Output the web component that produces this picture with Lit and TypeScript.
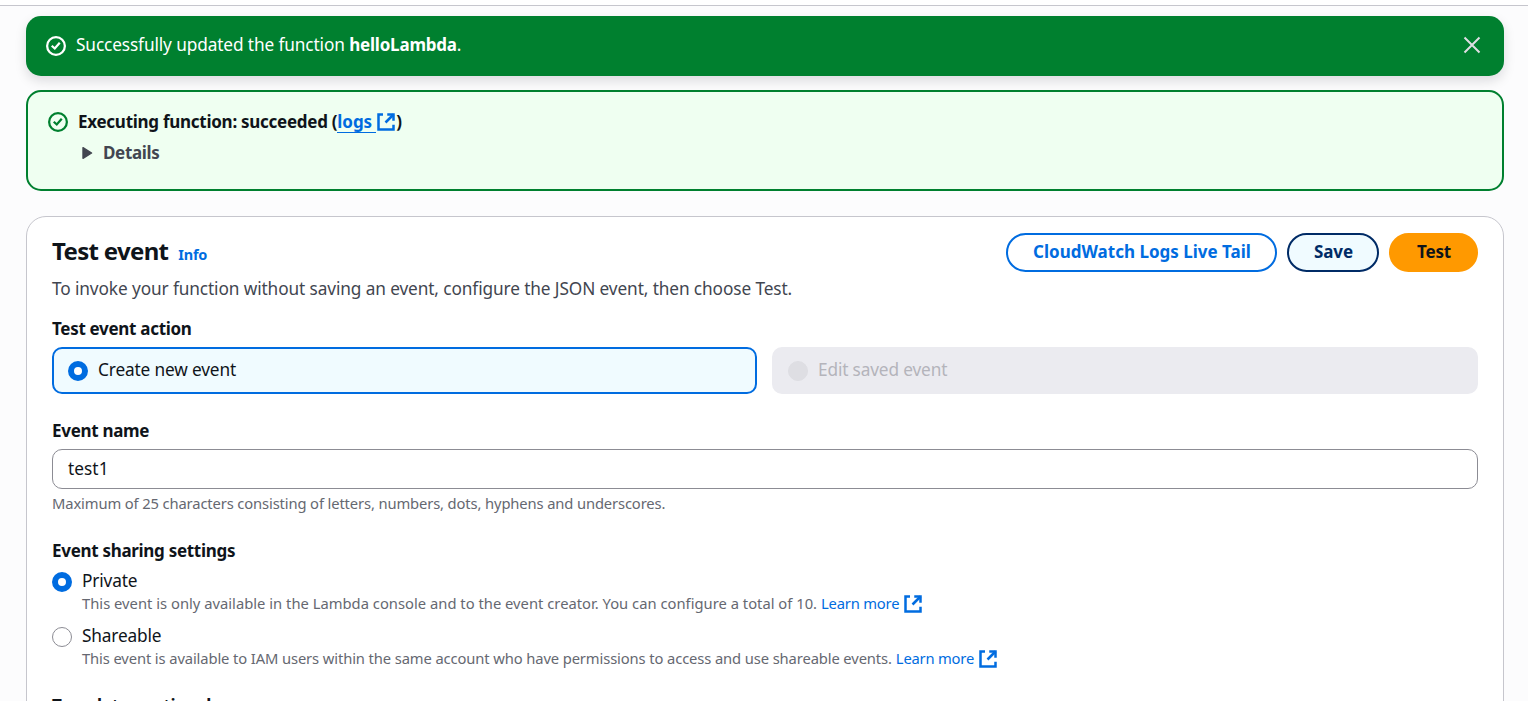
import { LitElement, html, css, svg } from "lit";
import { customElement } from "lit/decorators.js";

const statusIcon = html`<svg class="status" viewBox="0 0 16 16" width="20" height="20">
  ${svg`<circle cx="8" cy="8" r="7.1"></circle><path d="m4.6 7.8 2.4 2.2 4-4.6"></path>`}
</svg>`;

const externalIcon = html`<svg class="external" viewBox="0 0 16 16" width="20" height="20">
  ${svg`<path d="M14 10.2V14H2V2h3.6"></path><path d="M9 2h5v5"></path><path d="M14 2 7.6 8.4"></path>`}
</svg>`;

@customElement("app-root")
export class AppRoot extends LitElement {
  static styles = css`
    :host {
      display: block;
      height: 701px;
      overflow: hidden;
      box-sizing: border-box;
      background: #fcfcfd;
      color: #0f141a;
      font-family: "Noto Sans", "Open Sans", sans-serif;
      font-size: 17.25px;
      line-height: 25px;
      letter-spacing: -0.15px;
      white-space: nowrap;
    }
    * { box-sizing: border-box; }
    svg { display: block; flex: none; fill: none; stroke: currentColor; stroke-width: 2; }
    .status { stroke-width: 1.8; }
    .topbar { height: 6px; background: #fff; border-bottom: 1px solid #c6c6cd; }
    .content { padding: 10px 24px 0 26px; }
    .bold { font-weight: 700; font-size: 17px; letter-spacing: -0.3px; }
    a { color: #006ce0; text-decoration: none; }

    .flash {
      display: flex;
      align-items: flex-start;
      height: 60px;
      padding: 16px 22px 0 20px;
      border-radius: 15px;
      background: #00802f;
      color: #fff;
      box-shadow: 0 5px 12px rgba(0, 7, 22, 0.13);
    }
    .flash .status { margin: 4px 10px 0 0; }
    .flash .msg { flex: 1; letter-spacing: -0.12px; }
    .flash .bold { letter-spacing: -0.2px; }
    .close { margin-top: 3px; color: #dedee3; }

    .alert {
      display: flex;
      align-items: flex-start;
      height: 101px;
      margin-top: 14px;
      padding: 17px 20px;
      border: 2px solid #00802f;
      border-radius: 15px;
      background: #effff1;
    }
    .alert .status { margin: 3px 10px 0 0; color: #00802f; }
    .title { display: flex; letter-spacing: -0.27px; }
    .title a { display: flex; height: 24px; border-bottom: 1px solid #006ce0; width: 39px; letter-spacing: -0.05px; }
    .title .external { margin-top: 3px; color: #006ce0; }
    .details { display: flex; margin-top: 6px; color: #424650; letter-spacing: -0.35px; }
    .triangle { margin: 6px 10px 0 4px; fill: currentColor; stroke-width: 1.4; stroke-linejoin: round; }

    .card {
      height: 520px;
      margin-top: 25px;
      padding: 16px 25px 0;
      border: 1px solid #c6c6cd;
      border-radius: 20px;
      background: #fff;
    }
    .header { display: flex; justify-content: space-between; height: 43px; }
    .heading { display: flex; align-items: baseline; padding-top: 3px; }
    h2 { margin: 0; font-size: 24px; line-height: 30px; letter-spacing: -0.68px; }
    .info { margin-left: 10px; font-size: 14.5px; font-weight: 700; letter-spacing: -0.2px; }
    .actions { display: flex; gap: 10px; }
    .btn {
      width: 92px;
      height: 39px;
      padding: 0 0 2px 1px;
      border: 2px solid #002b66;
      border-radius: 20px;
      background: #f0fbff;
      color: #002b66;
      font: 700 17px/33px "Noto Sans", "Open Sans", sans-serif;
      letter-spacing: -0.15px;
      text-align: center;
    }
    .btn.link { width: 271px; border-color: #006ce0; background: #fff; color: #006ce0; letter-spacing: 0; }
    .btn.primary { width: 89px; border-color: #ff9900; background: #ff9900; color: #0f141a; }
    .intro { color: #424650; letter-spacing: -0.11px; }

    .label { margin-top: 15px; }
    .tiles { display: grid; grid-template-columns: 705px 1fr; gap: 15px; margin-top: 6px; }
    .tile {
      display: flex;
      gap: 10px;
      height: 47px;
      padding: 8px 14px;
      border: 2px solid #006ce0;
      border-radius: 10px;
      background: #f0fbff;
    }
    .tile .radio { margin-top: 4px; }
    .tile.off { border-color: #ebebf0; background: #ebebf0; color: #b4b4bb; }
    .radio { flex: none; width: 20px; height: 20px; border: 1px solid #8c8c94; border-radius: 50%; background: #fff; }
    .radio.on { border: 6px solid #006ce0; }
    .off .radio { border-color: #dedee3; background: #dedee3; }
    .name-label { margin-top: 24px; }
    .input {
      height: 40px;
      margin-top: 6px;
      padding: 6px 15px;
      border: 1px solid #8c8c94;
      border-radius: 10px;
      letter-spacing: 0.05px;
    }
    .desc { color: #656871; font-size: 14.75px; line-height: 20px; letter-spacing: -0.115px; }
    .hint { margin-top: 4px; letter-spacing: -0.13px; }
    .sharing-label { margin-top: 25px; }
    .option { display: flex; gap: 10px; height: 50px; margin-top: 5px; }
    .option .radio { margin-top: 4px; }
    .option .desc { display: flex; }
    .option a { margin-left: 4px; letter-spacing: -0.2px; }
    .option .external { margin: 1px 0 0 4px; color: #006ce0; }
    .wide { letter-spacing: 0.01px; }
    .template-label { margin-top: 20px; letter-spacing: -0.25px; }
  `;

  render() {
    return html`
      <div class="topbar"></div>
      <div class="content">
        <div class="flash">
          ${statusIcon}
          <div class="msg">Successfully updated the function <span class="bold">helloLambda</span>.</div>
          <svg class="close" viewBox="0 0 20 20" width="20" height="20"><path d="m2.5 2.5 15 15m0-15-15 15"></path></svg>
        </div>
        <div class="alert">
          ${statusIcon}
          <div class="bold">
            <div class="title"><span>Executing function: succeeded (</span><a>logs</a>${externalIcon}<span>)</span></div>
            <div class="details">
              <svg class="triangle" viewBox="0 0 11 14" width="11" height="14"><path d="M1 1.7v10.6L9.6 7z"></path></svg>
              <span>Details</span>
            </div>
          </div>
        </div>
        <div class="card">
          <div class="header">
            <div class="heading"><h2>Test event</h2><a class="info">Info</a></div>
            <div class="actions">
              <button class="btn link">CloudWatch Logs Live Tail</button>
              <button class="btn">Save</button>
              <button class="btn primary">Test</button>
            </div>
          </div>
          <div class="intro">To invoke your function without saving an event, configure the JSON event, then choose Test.</div>
          <div class="label bold">Test event action</div>
          <div class="tiles">
            <div class="tile"><span class="radio on"></span>Create new event</div>
            <div class="tile off"><span class="radio"></span>Edit saved event</div>
          </div>
          <div class="name-label bold">Event name</div>
          <div class="input">test1</div>
          <div class="desc hint">Maximum of 25 characters consisting of letters, numbers, dots, hyphens and underscores.</div>
          <div class="sharing-label bold">Event sharing settings</div>
          <div class="option">
            <span class="radio on"></span>
            <div>
              <div>Private</div>
              <div class="desc"><span class="wide">This event is only available in the Lambda console and to the event creator. You can configure a total of 10.</span><a>Learn more</a>${externalIcon}</div>
            </div>
          </div>
          <div class="option">
            <span class="radio"></span>
            <div>
              <div>Shareable</div>
              <div class="desc"><span>This event is available to IAM users within the same account who have permissions to access and use shareable events.</span><a>Learn more</a>${externalIcon}</div>
            </div>
          </div>
          <div class="template-label bold">Template - optional</div>
        </div>
      </div>
    `;
  }
}
